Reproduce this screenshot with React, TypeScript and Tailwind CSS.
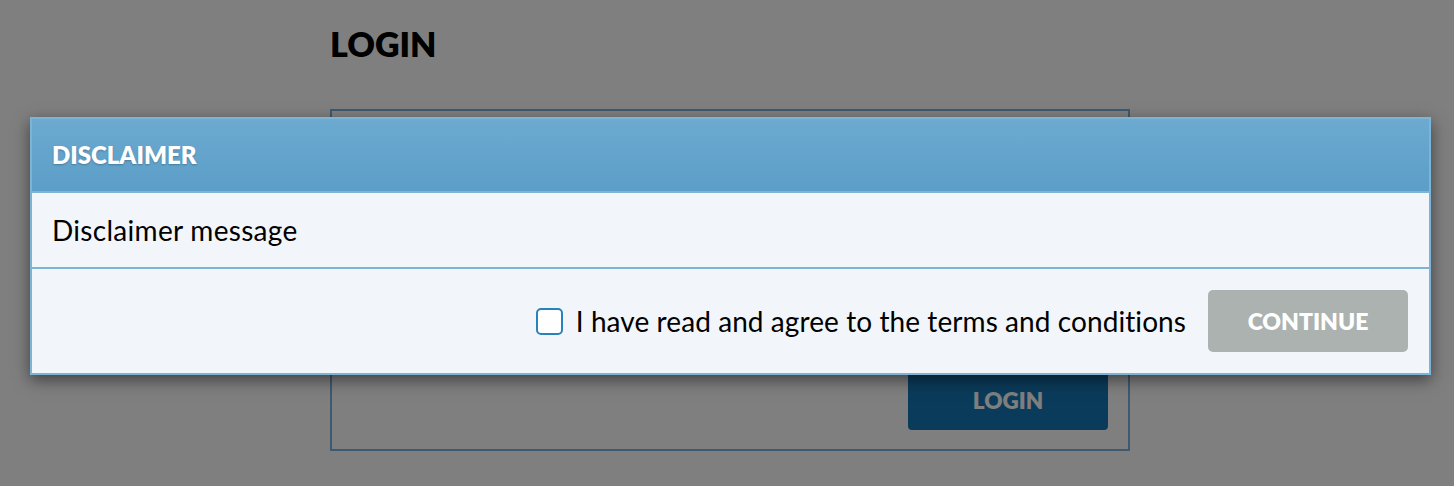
import React from "react";

export default function App() {
  return (
    <div className="relative w-[1454px] h-[486px] overflow-hidden bg-white" style={{ fontFamily: "Lato, 'Open Sans', sans-serif" }}>
      {/* underlying page */}
      <div className="pl-[330px] pt-[24px]">
        <h1 className="text-[34px] leading-[40px] font-extrabold text-black">LOGIN</h1>
        <div className="mt-[45px] w-[800px] h-[342px] border-2 border-[#7ab4e0] flex flex-col justify-end items-end pr-[20px] pb-[19px]">
          <button className="w-[200px] h-[58px] rounded-[4px] bg-[#1676b6] text-white font-extrabold text-[22.5px]">LOGIN</button>
        </div>
      </div>
      {/* overlay */}
      <div className="absolute inset-0 bg-black/50" />
      {/* modal */}
      <div className="absolute left-[30px] top-[117px] w-[1401px] border-2 border-[#7db3d5] bg-[#f2f6fa] shadow-[0_5px_15px_rgba(0,0,0,0.5)]">
        <div className="h-[74px] flex items-center pl-[20px] bg-gradient-to-b from-[#6caad0] to-[#5b9ec8] border-b-2 border-[#7db3d5]">
          <h2 className="text-white font-extrabold text-[24px] [text-shadow:0_1px_2px_rgba(0,0,0,0.25)]">DISCLAIMER</h2>
        </div>
        <div className="h-[76px] flex items-center pl-[20px] text-[28px] tracking-[0.3px] text-black border-b-2 border-[#7db3d5]">
          Disclaimer message
        </div>
        <div className="h-[104px] flex items-center justify-end pr-[21px] gap-[22px]">
          <label className="flex items-center gap-[13px] text-[28px] tracking-[0.08px] text-black">
            <span className="w-[27px] h-[27px] rounded-[5px] border-[2.5px] border-[#2a82bb] bg-white" />
            I have read and agree to the terms and conditions
          </label>
          <button className="w-[200px] h-[62px] rounded-[5px] bg-[#abb2b0] text-white font-extrabold text-[23px]">CONTINUE</button>
        </div>
      </div>
    </div>
  );
}
